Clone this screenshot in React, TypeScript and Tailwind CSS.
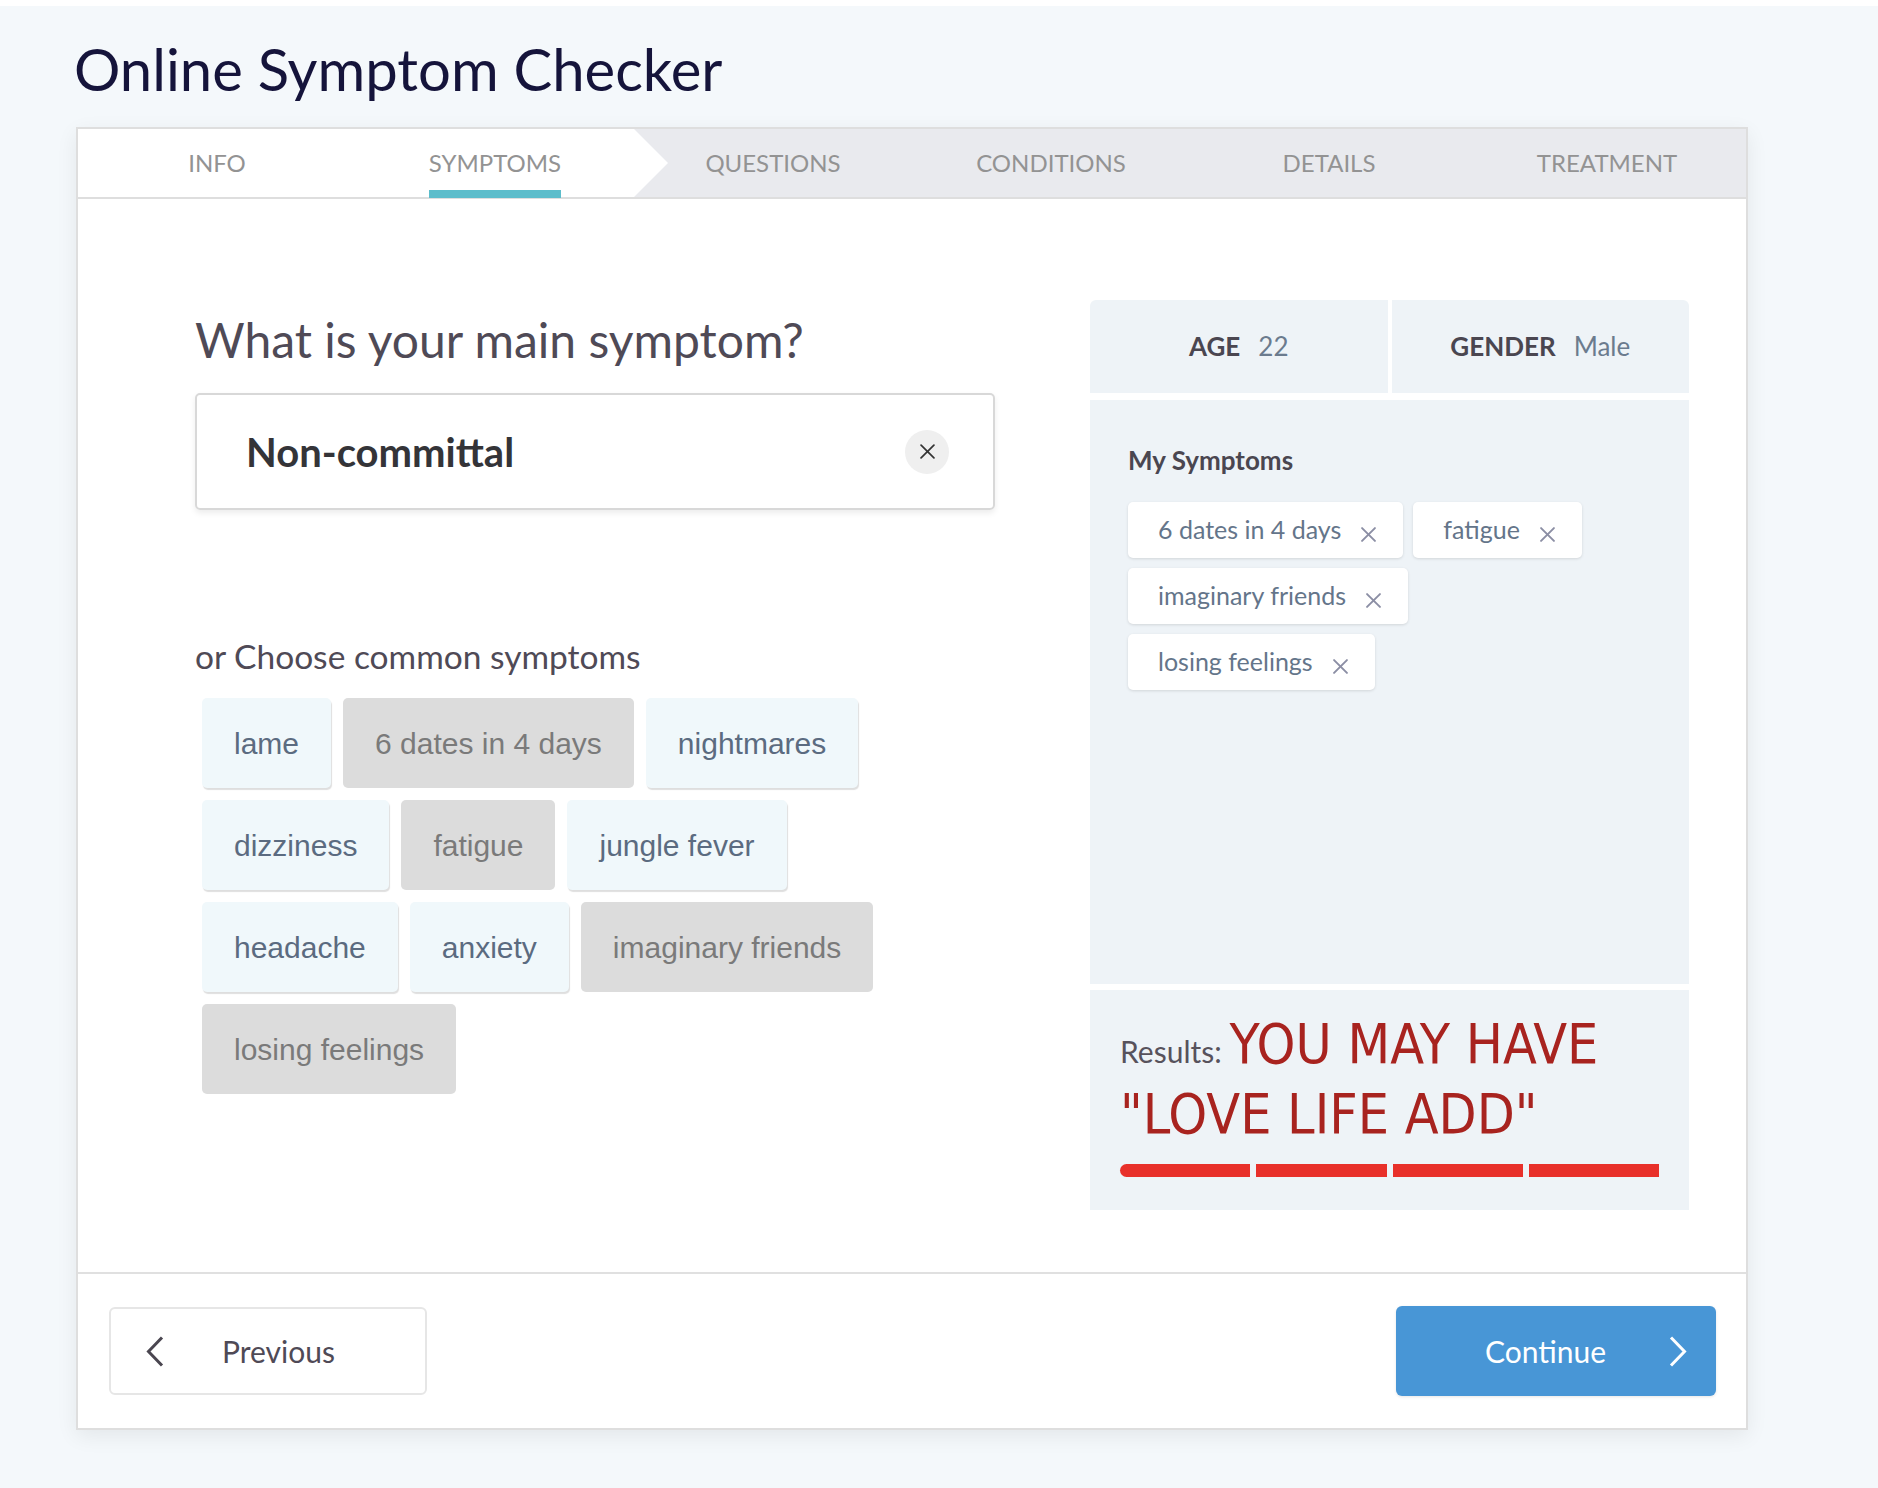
const tabs = ["INFO", "SYMPTOMS", "QUESTIONS", "CONDITIONS", "DETAILS", "TREATMENT"];

const common = [
  { label: "lame", on: false },
  { label: "6 dates in 4 days", on: true },
  { label: "nightmares", on: false },
  { label: "dizziness", on: false },
  { label: "fatigue", on: true },
  { label: "jungle fever", on: false },
  { label: "headache", on: false },
  { label: "anxiety", on: false },
  { label: "imaginary friends", on: true },
  { label: "losing feelings", on: true },
];

const mine = ["6 dates in 4 days", "fatigue", "imaginary friends", "losing feelings"];

function Cross({ size, stroke, color }: { size: number; stroke: number; color: string }) {
  return (
    <svg width={size} height={size} viewBox="0 0 14 14" fill="none" stroke={color} strokeWidth={stroke} strokeLinecap="round">
      <line x1="1" y1="1" x2="13" y2="13" />
      <line x1="13" y1="1" x2="1" y2="13" />
    </svg>
  );
}

function Chevron({ dir, color }: { dir: "left" | "right"; color: string }) {
  return (
    <svg width="18" height="31" viewBox="0 0 18 31" fill="none" stroke={color} strokeWidth="3">
      {dir === "left" ? <polyline points="16,1.5 2.5,15.5 16,29.5" /> : <polyline points="2,1.5 15.5,15.5 2,29.5" />}
    </svg>
  );
}

export default function App() {
  return (
    <div className="min-h-screen bg-[#f4f8fb] [font-family:Lato,sans-serif] pb-[58px]">
      <div className="h-[6px] bg-white" />

      {/* header */}
      <h1 className="pt-[28px] pl-[74px] text-[58px] leading-[70px] text-[#15143b]">Online Symptom Checker</h1>

      {/* card */}
      <div className="mt-[23px] ml-[76px] w-[1672px] bg-white border-2 border-[#dedede] shadow-[0_6px_20px_rgba(0,0,0,0.07)]">
        {/* steps */}
        <div className="grid grid-cols-6 h-[70px] bg-[#e9eaee] border-b-2 border-[#dedede]">
          {tabs.map((t, i) => (
            <div key={t} className={`relative flex items-center justify-center ${i < 2 ? "bg-white" : ""}`}>
              <span className="relative text-[24px] leading-[30px] text-[#939393]">
                {t}
                {i === 1 && <span className="absolute left-0 right-0 top-[42px] h-2 bg-[#5dbdcb]" />}
              </span>
              {i === 1 && (
                <svg className="absolute left-full top-0 z-10 h-full w-[34px]" viewBox="0 0 34 68" preserveAspectRatio="none">
                  <polygon points="0,0 34,34 0,68" fill="#ffffff" />
                </svg>
              )}
            </div>
          ))}
        </div>

        {/* body */}
        <div className="flex pt-[101px] pb-[62px] pl-[117px] pr-[57px]">
          <div className="w-[802px]">
            <h2 className="mt-[12px] text-[48px] leading-[56px] text-[#4f4a56]">What is your main symptom?</h2>
            <div className="mt-[25px] h-[117px] w-[800px] flex items-center justify-between pl-[49px] pr-[44px] border-2 border-[#d8d8d8] rounded-[5px] shadow-[0_3px_6px_rgba(0,0,0,0.08)]">
              <span className="text-[40px] font-bold text-[#343438]">Non-committal</span>
              <button className="w-[44px] h-[44px] rounded-full bg-[#efefef] flex items-center justify-center">
                <Cross size={15} stroke={1.6} color="#333333" />
              </button>
            </div>

            <p className="mt-[127px] text-[33.5px] leading-[38px] text-[#4f4a56]">or Choose common symptoms</p>
            <div className="mt-[23px] pl-[7px] w-[727px] flex flex-wrap gap-3 [font-family:'Liberation_Sans',Arial,sans-serif]">
              {common.map((c) => (
                <div
                  key={c.label}
                  className={`h-[90px] px-8 flex items-center rounded-[5px] text-[30px] ${
                    c.on
                      ? "bg-[#dcdcdc] text-[#7a7a7a]"
                      : "bg-[#f0f8fb] text-[#5b6b80] shadow-[1px_2px_1px_rgba(0,0,0,0.13)]"
                  }`}
                >
                  {c.label}
                </div>
              ))}
            </div>
          </div>

          <div className="ml-auto w-[599px]">
            <div className="grid grid-cols-2 gap-1 h-[93px] text-[26px]">
              <div className="bg-[#eef3f7] rounded-tl-md flex items-center justify-center gap-[18px]">
                <span className="font-bold text-[#4a4650]">AGE</span>
                <span className="text-[#6b7b8e]">22</span>
              </div>
              <div className="bg-[#eef3f7] rounded-tr-md flex items-center justify-center gap-[18px]">
                <span className="font-bold text-[#4a4650]">GENDER</span>
                <span className="text-[#6b7b8e]">Male</span>
              </div>
            </div>

            <div className="mt-[7px] h-[584px] bg-[#eef3f7] px-[38px] pt-[44px]">
              <p className="text-[26px] leading-[32px] font-bold text-[#4a4650]">My Symptoms</p>
              <div className="mt-[26px] flex flex-wrap gap-[10px]">
                {mine.map((m) => (
                  <div key={m} className="h-[56px] flex items-center pl-[30px] pr-[27px] bg-white rounded-[5px] shadow-[0_1px_3px_rgba(0,0,0,0.12)] text-[25px] text-[#64758a]">
                    {m}
                    <span className="ml-[20px] mt-[8px]">
                      <Cross size={15} stroke={1.8} color="#8b8ea4" />
                    </span>
                  </div>
                ))}
              </div>
            </div>

            <div className="mt-[6px] h-[220px] bg-[#eef3f7] px-[30px] pt-[19px]">
              <p className="text-[55px] leading-[70px] text-[#a8231f] [font-family:'Liberation_Sans_Narrow','DejaVu_Sans_Condensed',Lato,sans-serif]">
                <span className="text-[30px] leading-none text-[#57525c] [font-family:Lato,sans-serif]">Results: </span>
                YOU MAY HAVE "LOVE LIFE ADD"
              </p>
              <div className="mt-[15px] flex gap-[6px] h-[13px]">
                <div className="flex-1 bg-[#e8302a] rounded-l-full" />
                <div className="flex-1 bg-[#e8302a]" />
                <div className="flex-1 bg-[#e8302a]" />
                <div className="flex-1 bg-[#e8302a]" />
              </div>
            </div>
          </div>
        </div>

        {/* footer */}
        <div className="h-[156px] border-t-2 border-[#e0e0e0] flex items-center justify-between pl-[31px] pr-[30px]">
          <button className="w-[318px] h-[88px] flex items-center pl-[35px] border-2 border-[#e6e6e6] rounded-[6px] text-[30px] text-[#4f4a56]">
            <Chevron dir="left" color="#4a4650" />
            <span className="ml-[58px]">Previous</span>
          </button>
          <button className="w-[320px] h-[90px] flex items-center justify-between pl-[89px] pr-[29px] bg-[#4896d6] rounded-[6px] text-[30px] text-white shadow-[0_1px_3px_rgba(0,0,0,0.1)]">
            <span>Continue</span>
            <Chevron dir="right" color="#ffffff" />
          </button>
        </div>
      </div>
    </div>
  );
}
